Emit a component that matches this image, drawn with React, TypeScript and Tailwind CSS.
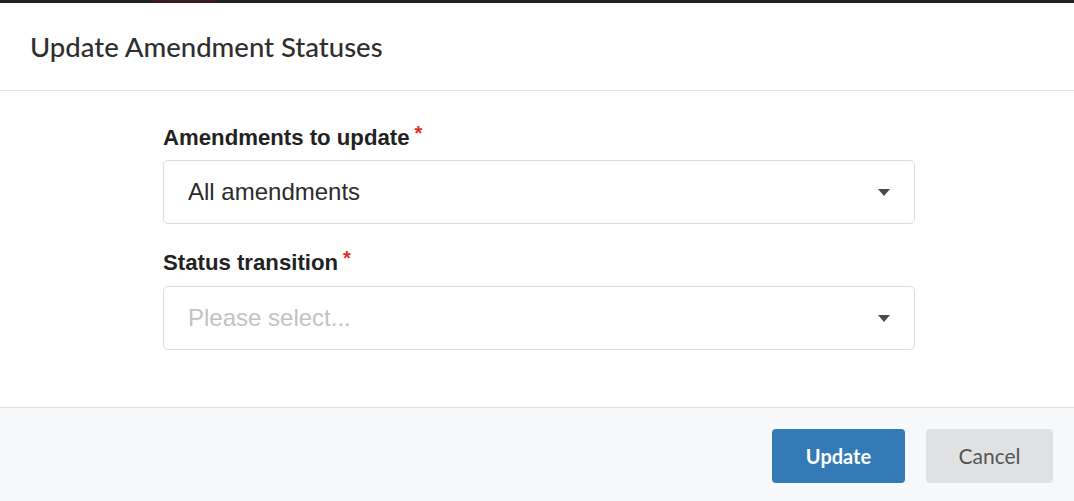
import React from "react";

function Caret() {
  return (
    <svg width="12" height="7" viewBox="0 0 12 7" className="shrink-0">
      <path d="M0 0 L12 0 L6 7 Z" fill="#4a4a4a" />
    </svg>
  );
}

function SelectBox({ value, placeholder }: { value?: string; placeholder?: string }) {
  return (
    <div className="flex h-[64px] items-center justify-between rounded-[5px] border border-[#dcdcdc] bg-white pl-[24px] pr-[24px]">
      {value ? (
        <span className="text-[24px] leading-none text-[#2b2b2b]">{value}</span>
      ) : (
        <span className="text-[24px] leading-none text-[#c2c2c2]">{placeholder}</span>
      )}
      <Caret />
    </div>
  );
}

function Label({ children }: { children: React.ReactNode }) {
  return (
    <div className="flex items-start text-[22.2px] font-bold leading-[28px] text-[#222]">
      <span>{children}</span>
      <span className="ml-[5px] -mt-[5px] text-[20px] font-bold text-[#e02b27]">*</span>
    </div>
  );
}

export default function App() {
  return (
    <div className="flex h-[501px] w-[1074px] flex-col overflow-hidden bg-white" style={{ fontFamily: '"Liberation Sans", Arial, sans-serif' }}>
      <div className="flex h-[3px] shrink-0 bg-[#222222]">
        <div className="ml-[150px] h-full w-[68px] bg-[#3a1a1c]" />
      </div>
      <div className="flex h-[88px] shrink-0 items-center border-b border-[#e2e2e2] px-[30px]">
        <h1 className="text-[27.5px] font-medium text-[#2f2f2f]" style={{ fontFamily: 'Lato, "Open Sans", sans-serif' }}>
          Update Amendment Statuses
        </h1>
      </div>
      <div className="flex flex-1 justify-center pl-[4px] pt-[33px]">
        <div className="flex w-[752px] flex-col">
          <Label>Amendments to update</Label>
          <div className="mt-[8px]">
            <SelectBox value="All amendments" />
          </div>
          <div className="mt-[25px]">
            <Label>Status transition</Label>
          </div>
          <div className="mt-[9px]">
            <SelectBox placeholder="Please select..." />
          </div>
        </div>
      </div>
      <div className="flex h-[94px] shrink-0 items-start justify-end gap-[21px] border-t border-[#dedede] bg-[#f7f8fa] pr-[21px] pt-[21px]" style={{ fontFamily: 'Lato, "Open Sans", sans-serif' }}>
        <button className="h-[54px] w-[133px] rounded-[4px] bg-[#337ab7] text-[20px] font-bold text-white">Update</button>
        <button className="h-[54px] w-[127px] rounded-[4px] bg-[#e0e1e2] text-[21px] font-normal text-[#555]">Cancel</button>
      </div>
    </div>
  );
}
